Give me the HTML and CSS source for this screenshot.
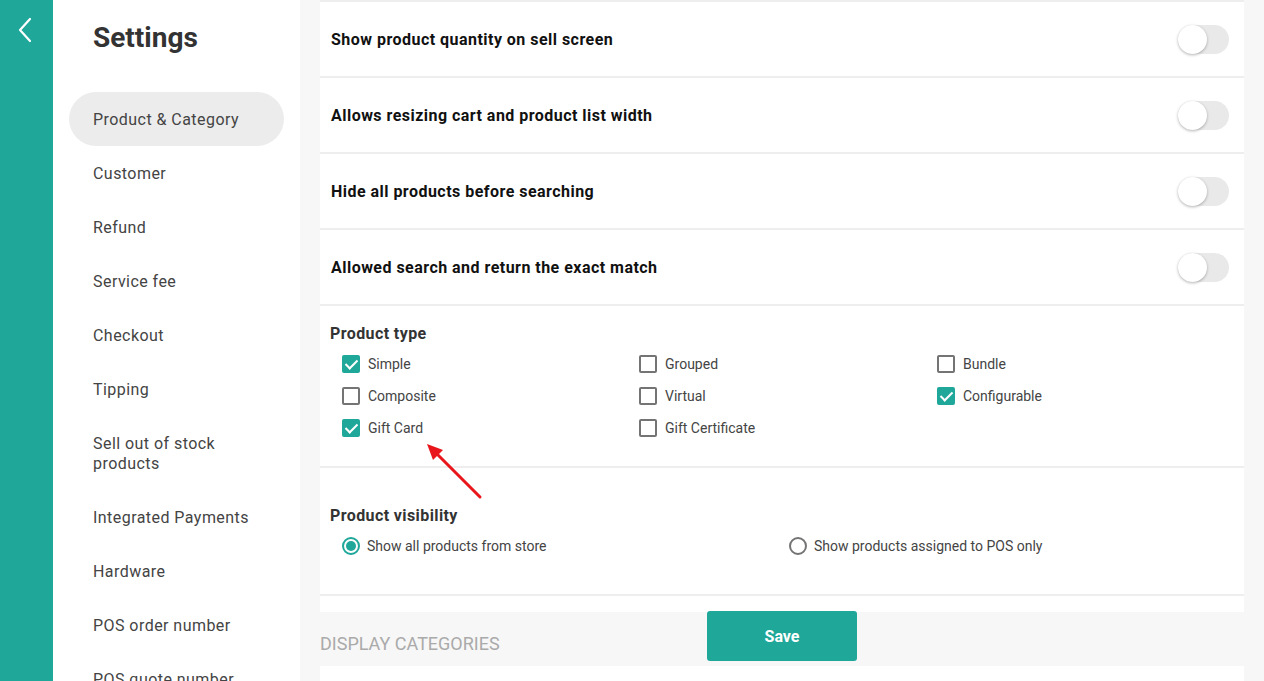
FILE: index.html
```html
<!DOCTYPE html>
<html>
<head>
<meta charset="utf-8">
<link rel="stylesheet" href="styles.css">
</head>
<body>
<div class="app">
  <div class="rail">
    <svg class="back" width="20" height="30" viewBox="0 0 20 30"><path d="M14 4 L4 15 L14 26" fill="none" stroke="#fff" stroke-width="2.2" stroke-linecap="round" stroke-linejoin="round"/></svg>
  </div>
  <aside class="sidebar">
    <h1 class="title">Settings</h1>
    <nav class="menu">
      <div class="item active">Product &amp; Category</div>
      <div class="item">Customer</div>
      <div class="item">Refund</div>
      <div class="item">Service fee</div>
      <div class="item">Checkout</div>
      <div class="item">Tipping</div>
      <div class="item two">Sell out of stock<br>products</div>
      <div class="item">Integrated Payments</div>
      <div class="item">Hardware</div>
      <div class="item">POS order number</div>
      <div class="item">POS quote number</div>
    </nav>
  </aside>
  <main class="main">
    <section class="card">
      <div class="row"><span>Show product quantity on sell screen</span><span class="toggle"></span></div>
      <div class="row"><span>Allows resizing cart and product list width</span><span class="toggle"></span></div>
      <div class="row"><span>Hide all products before searching</span><span class="toggle"></span></div>
      <div class="row"><span>Allowed search and return the exact match</span><span class="toggle"></span></div>
      <div class="group types">
        <div class="group-title">Product type</div>
        <div class="grid3">
          <label class="opt"><span class="cb on"></span>Simple</label>
          <label class="opt"><span class="cb"></span>Grouped</label>
          <label class="opt"><span class="cb"></span>Bundle</label>
          <label class="opt"><span class="cb"></span>Composite</label>
          <label class="opt"><span class="cb"></span>Virtual</label>
          <label class="opt"><span class="cb on"></span>Configurable</label>
          <label class="opt"><span class="cb on"></span>Gift Card</label>
          <label class="opt"><span class="cb"></span>Gift Certificate</label>
        </div>
      </div>
      <div class="group vis">
        <div class="group-title">Product visibility</div>
        <div class="grid2">
          <label class="opt"><span class="rd on"></span>Show all products from store</label>
          <label class="opt"><span class="rd"></span>Show products assigned to POS only</label>
        </div>
      </div>
    </section>
    <div class="section-head">DISPLAY CATEGORIES</div>
    <section class="card next"></section>
    <button class="save">Save</button>
    <svg class="arrow" width="70" height="70" viewBox="0 0 70 70"><line x1="61" y1="59" x2="14" y2="12" stroke="#e8161b" stroke-width="3" stroke-linecap="round"/><path d="M8 6 L24 12 L14 22 Z" fill="#e8161b"/></svg>
  </main>
</div>
</body>
</html>
```

FILE: styles.css
```css
* { box-sizing: border-box; }
html, body { margin: 0; padding: 0; height: 100%; overflow: hidden; }
body { font-family: Roboto, "Liberation Sans", sans-serif; background: #f7f7f7; color: #333; }
.app { display: flex; height: 681px; }
.rail { width: 53px; flex: none; background: #1fa79a; padding: 15px 0 0 16px; }
.back { display: block; }
.sidebar { width: 247px; flex: none; background: #fff; padding: 0 16px; }
.title { margin: 0; font-size: 28px; font-weight: 700; color: #333; padding: 21px 0 0 24px; height: 92px; line-height: 34px; }
.menu { display: flex; flex-direction: column; }
.item { height: 54px; display: flex; align-items: center; padding-left: 24px; font-size: 16px; letter-spacing: 0.45px; color: #444; border-radius: 27px; }
.item.two { height: 74px; line-height: 20px; padding-top: 2px; }
.item.active { background: #ececec; }
.main { flex: 1; padding: 0 20px; position: relative; }
.card { background: #fff; border-top: 2px solid #eeeeee; }
.row { height: 76px; border-bottom: 2px solid #eeeeee; display: flex; align-items: center; justify-content: space-between; padding: 0 15px 0 11px; font-size: 16px; letter-spacing: 0.47px; font-weight: 700; color: #111; }
.toggle { width: 51px; height: 29px; border-radius: 15px; background: #e9e9e9; position: relative; }
.toggle::after { content: ""; position: absolute; left: 0; top: 0; width: 29px; height: 29px; border-radius: 50%; background: #fff; box-shadow: 0 1px 3px rgba(0,0,0,0.3); }
.group { border-bottom: 2px solid #eeeeee; padding: 0 10px; }
.group-title { font-size: 16px; letter-spacing: 0.4px; font-weight: 700; color: #333; line-height: 20px; }
.types { height: 162px; padding-top: 18px; }
.vis { height: 128px; padding-top: 38px; }
.grid3 { display: grid; grid-template-columns: 297px 298px 1fr; padding: 0 0 0 12px; margin-top: 4px; }
.grid2 { display: grid; grid-template-columns: 447px 1fr; padding-left: 12px; margin-top: 4px; }
.opt { height: 32px; display: flex; align-items: center; font-size: 14px; color: #444; }
.cb { width: 18px; height: 18px; border: 2px solid #747474; border-radius: 2px; margin-right: 8px; position: relative; flex: none; }
.cb.on { background: #1fa79a; border-color: #1fa79a; }
.cb.on::after { content: ""; position: absolute; left: 4px; top: 0px; width: 5px; height: 10px; border: solid #fff; border-width: 0 2px 2px 0; transform: rotate(45deg); }
.rd { width: 18px; height: 18px; border: 2px solid #747474; border-radius: 50%; margin-right: 7px; position: relative; flex: none; }
.rd.on { border-color: #1fa79a; }
.rd.on::after { content: ""; position: absolute; left: 2px; top: 2px; width: 10px; height: 10px; border-radius: 50%; background: #1fa79a; }
.card:first-child { padding-bottom: 16px; }
.section-head { height: 54px; display: flex; align-items: center; font-size: 18px; color: #aaa; padding-top: 8px; }
.next { height: 40px; border-top: none; }
.save { position: absolute; left: 407px; top: 611px; width: 150px; height: 50px; background: #1fa79a; color: #fff; border: none; border-radius: 3px; font-family: Roboto, "Liberation Sans", sans-serif; font-size: 16px; font-weight: 700; }
.arrow { position: absolute; left: 119px; top: 438px; }
```
